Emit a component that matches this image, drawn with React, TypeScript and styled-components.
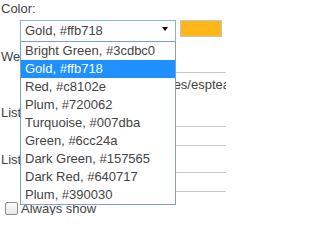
import { useState } from "react";
import styled, { createGlobalStyle } from "styled-components";

const GlobalStyle = createGlobalStyle`
  html, body {
    margin: 0;
    padding: 0;
    background: #fff;
  }

  body {
    font-family: "Liberation Sans", Arial, sans-serif;
    font-size: 13px;
    color: #444;
    overflow: hidden;
  }
`;

const FORM_Settings = styled.form`
  display: flex;
  flex-direction: column;
  width: 226px;
  height: 215px;
  overflow: hidden;
`;

const LABEL_Field = styled.label<{ $gap?: number }>`
  display: block;
  height: 18px;
  line-height: 18px;
  padding-left: 1px;
  margin-top: ${(p) => p.$gap ?? 0}px;
  white-space: nowrap;
`;

const DIV_SelectRow = styled.div`
  display: flex;
  align-items: flex-start;
  column-gap: 4px;
  margin: 2px 0 0 20px;
`;

const DIV_SelectWrap = styled.div`
  position: relative;
  z-index: 2;
`;

const DIV_Select = styled.div`
  display: flex;
  align-items: center;
  justify-content: space-between;
  box-sizing: border-box;
  width: 156px;
  height: 22px;
  padding: 0 7px 0 4px;
  border: 1px solid #92b0dc;
  background: #fff;
  color: #444;
  line-height: 20px;
  cursor: default;
`;

const SPAN_Arrow = styled.span`
  width: 0;
  height: 0;
  margin-bottom: 4px;
  border-left: 3px solid transparent;
  border-right: 3px solid transparent;
  border-top: 4px solid #000;
`;

const UL_Options = styled.ul`
  position: absolute;
  top: 21px;
  left: 0;
  box-sizing: border-box;
  width: 156px;
  margin: 0;
  padding: 0;
  list-style: none;
  border: 1px solid #7a9ed6;
  background: #fff;
`;

const LI_Option = styled.li<{ $active: boolean }>`
  height: 18px;
  padding-left: 4px;
  line-height: 18px;
  white-space: nowrap;
  color: ${(p) => (p.$active ? "#fff" : "#444")};
  background: ${(p) => (p.$active ? "#1e90ff" : "transparent")};
`;

const DIV_Swatch = styled.div<{ $color: string }>`
  box-sizing: border-box;
  width: 42px;
  height: 17px;
  border: 1px solid #c6c6c6;
  background: ${(p) => p.$color};
`;

const DIV_UrlBox = styled.div`
  box-sizing: border-box;
  height: 28px;
  margin: 6px 0 0 20px;
  padding: 3px 0 0 12px;
  border-top: 1px solid #c8c8c8;
  line-height: 18px;
  white-space: nowrap;
  overflow: hidden;
`;

const INPUT_Text = styled.input<{ $gap: number }>`
  box-sizing: border-box;
  width: 220px;
  height: 21px;
  margin: ${(p) => p.$gap}px 0 0 20px;
  padding: 0 4px;
  border: 1px solid #c8c8c8;
  font: inherit;
  color: #444;
  outline: none;
`;

const LABEL_Check = styled.label`
  display: flex;
  align-items: flex-start;
  column-gap: 3px;
  margin: 10px 0 0 5px;
  line-height: 13px;
  white-space: nowrap;
`;

const SPAN_Box = styled.span`
  box-sizing: border-box;
  width: 13px;
  height: 13px;
  border: 1px solid #8f8f8f;
  border-radius: 2px;
  background: linear-gradient(#fdfdfd, #e6e6e6);
`;

const COLORS = [
  { name: "Bright Green", hex: "#3cdbc0" },
  { name: "Gold", hex: "#ffb718" },
  { name: "Red", hex: "#c8102e" },
  { name: "Plum", hex: "#720062" },
  { name: "Turquoise", hex: "#007dba" },
  { name: "Green", hex: "#6cc24a" },
  { name: "Dark Green", hex: "#157565" },
  { name: "Dark Red", hex: "#640717" },
  { name: "Plum", hex: "#390030" },
];

const App = () => {
  const [selected, setSelected] = useState(1);
  const current = COLORS[selected];

  return (
    <>
      <GlobalStyle />
      <FORM_Settings onSubmit={(e) => e.preventDefault()}>
        <LABEL_Field>Color:</LABEL_Field>
        <DIV_SelectRow>
          <DIV_SelectWrap>
            <DIV_Select>
              <span>
                {current.name}, {current.hex}
              </span>
              <SPAN_Arrow />
            </DIV_Select>
            <UL_Options>
              {COLORS.map((c, i) => (
                <LI_Option
                  key={c.hex}
                  $active={i === selected}
                  onClick={() => setSelected(i)}
                >
                  {c.name}, {c.hex}
                </LI_Option>
              ))}
            </UL_Options>
          </DIV_SelectWrap>
          <DIV_Swatch $color={current.hex} />
        </DIV_SelectRow>
        <LABEL_Field $gap={6}>Web URL:</LABEL_Field>
        <DIV_UrlBox>http://intranet.contoso/sites/espteam/SitePages</DIV_UrlBox>
        <LABEL_Field $gap={5}>List Title:</LABEL_Field>
        <INPUT_Text type="text" $gap={4} defaultValue="" />
        <LABEL_Field $gap={5}>List View:</LABEL_Field>
        <INPUT_Text type="text" $gap={3} defaultValue="" />
        <LABEL_Check>
          <SPAN_Box />
          Always show
        </LABEL_Check>
      </FORM_Settings>
    </>
  );
};

export default App;
